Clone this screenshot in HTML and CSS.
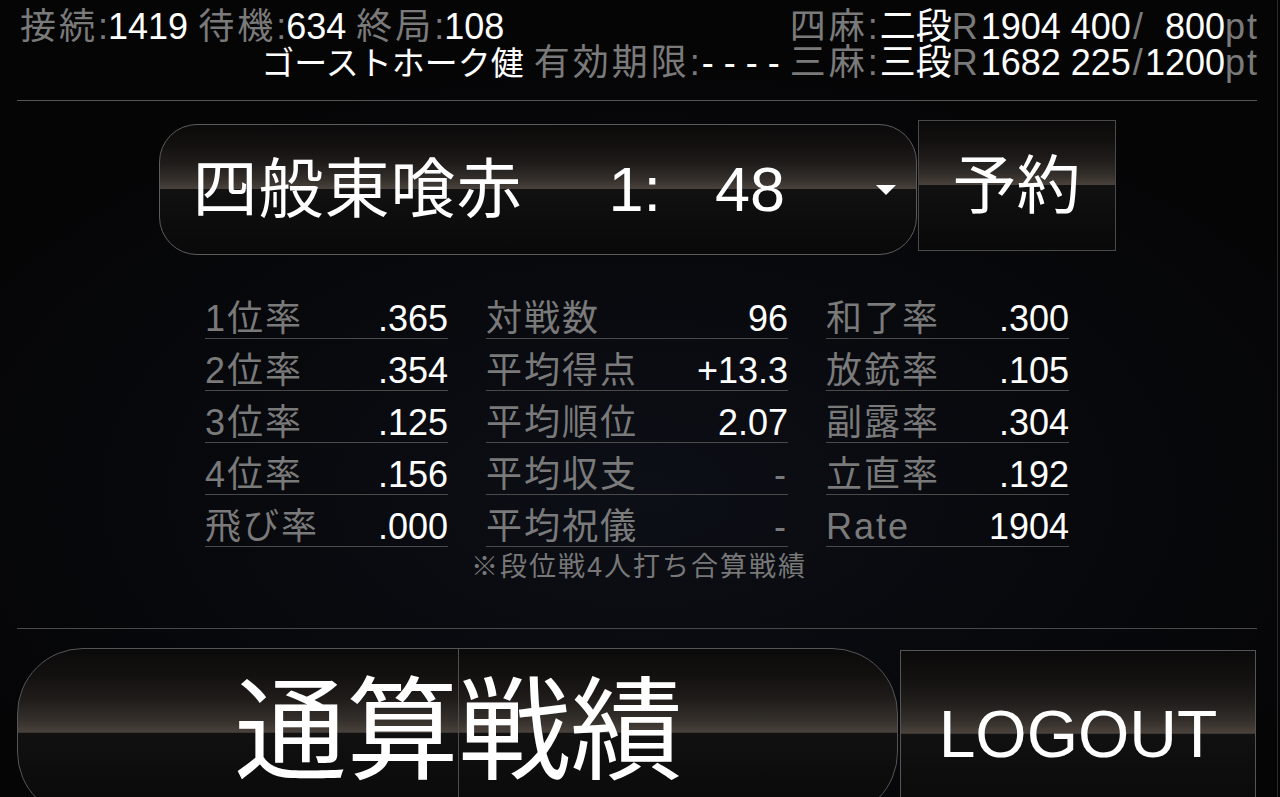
FILE: index.html
```html
<!DOCTYPE html>
<html lang="ja">
<head>
<meta charset="utf-8">
<title>ロビー</title>
<link rel="stylesheet" href="styles.css">
</head>
<body>
<div class="screen">
  <header class="status">
    <div class="status-row">
      <div class="conn"><span class="lbl k">接続</span><span class="lbl">:</span>1419 <span class="lbl k">待機</span><span class="lbl">:</span>634 <span class="lbl k">終局</span><span class="lbl">:</span>108</div>
      <div class="rank"><span class="lbl k">四麻</span><span class="lbl sep">:</span>二段<span class="lbl r">R</span>1904 400<span class="lbl sl">/</span>  800<span class="lbl pt">pt</span></div>
    </div>
    <div class="status-row end">
      <div class="rank"><span class="name">ゴーストホーク健</span> <span class="lbl k">有効期限</span><span class="lbl sep">:</span>- - - - <span class="lbl k">三麻</span><span class="lbl sep">:</span>三段<span class="lbl r">R</span>1682 225<span class="lbl sl">/</span>1200<span class="lbl pt">pt</span></div>
    </div>
  </header>

  <section class="lobby">
    <div class="select gloss">
      <span class="mode">四般東喰赤</span>
      <span class="room">1:</span>
      <span class="count">48</span>
      <span class="caret"></span>
    </div>
    <div class="reserve gloss">予約</div>
  </section>

  <section class="stats">
    <div class="col">
      <div class="row"><span class="lbl">1位率</span><span>.365</span></div>
      <div class="row"><span class="lbl">2位率</span><span>.354</span></div>
      <div class="row"><span class="lbl">3位率</span><span>.125</span></div>
      <div class="row"><span class="lbl">4位率</span><span>.156</span></div>
      <div class="row"><span class="lbl">飛び率</span><span>.000</span></div>
    </div>
    <div class="col wide">
      <div class="row"><span class="lbl">対戦数</span><span>96</span></div>
      <div class="row"><span class="lbl">平均得点</span><span>+13.3</span></div>
      <div class="row"><span class="lbl">平均順位</span><span>2.07</span></div>
      <div class="row"><span class="lbl">平均収支</span><span class="lbl">-</span></div>
      <div class="row"><span class="lbl">平均祝儀</span><span class="lbl">-</span></div>
    </div>
    <div class="col">
      <div class="row"><span class="lbl">和了率</span><span>.300</span></div>
      <div class="row"><span class="lbl">放銃率</span><span>.105</span></div>
      <div class="row"><span class="lbl">副露率</span><span>.304</span></div>
      <div class="row"><span class="lbl">立直率</span><span>.192</span></div>
      <div class="row"><span class="lbl">Rate</span><span>1904</span></div>
    </div>
  </section>
  <p class="note">※段位戦4人打ち合算戦績</p>

  <footer class="actions">
    <div class="total gloss">通算戦績</div>
    <div class="logout gloss">LOGOUT</div>
  </footer>
</div>
</body>
</html>
```

FILE: styles.css
```css
html, body {
  margin: 0;
  height: 100%;
}

body {
  background: radial-gradient(ellipse 60% 55% at 50% 62%, #0c0f16 0%, #08090d 55%, #050506 100%);
  font-family: "Liberation Sans", "Noto Sans CJK JP", sans-serif;
  color: #fff;
  overflow: hidden;
}

.screen {
  box-sizing: border-box;
  width: 1278px;
  height: 797px;
  padding: 0 20px 0 17px;
  border-right: 1px solid #2a2a2a;
  overflow: hidden;
}

.lbl {
  color: #7a7a7a;
}

.k {
  letter-spacing: 3px;
}

/* status header */
.status {
  box-sizing: border-box;
  height: 101px;
  padding-top: 9px;
  border-bottom: 1px solid #555;
}

.status-row {
  display: flex;
  justify-content: space-between;
  height: 36px;
  font-size: 36px;
  line-height: 36px;
  white-space: pre;
}

.status-row.end {
  justify-content: flex-end;
}

.conn {
  padding-left: 3px;
}

.name {
  font-size: 33px;
}

.sep {
  letter-spacing: 2px;
}

.r {
  letter-spacing: 3px;
}

.sl {
  padding-left: 2px;
  letter-spacing: 2px;
}

.pt {
  letter-spacing: 2px;
  margin-right: -2px;
}

/* glossy buttons */
.gloss {
  background: linear-gradient(to bottom,
    #0b0a0a 0%,
    #131110 16%,
    #1f1c1a 30%,
    #342f2b 42%,
    #4a423c 49.6%,
    #121111 50%,
    #0e0d0d 72%,
    #090909 100%);
}

.lobby {
  display: flex;
  justify-content: center;
  align-items: flex-start;
  margin-top: 19px;
}

.select {
  box-sizing: border-box;
  width: 758px;
  height: 131px;
  margin-top: 4px;
  padding-left: 33px;
  border: 1px solid #5c5c5c;
  border-radius: 38px;
  display: flex;
  align-items: center;
  line-height: 1;
}

.mode {
  font-size: 65px;
  letter-spacing: 1px;
}

.room {
  font-size: 63px;
  margin-left: 86px;
}

.count {
  font-size: 63px;
  margin-left: 54px;
}

.caret {
  width: 0;
  height: 0;
  margin-left: 91px;
  border-left: 10px solid transparent;
  border-right: 10px solid transparent;
  border-top: 10px solid #fff;
}

.reserve {
  box-sizing: border-box;
  width: 198px;
  height: 131px;
  margin-left: 1px;
  border: 1px solid #4a4a4a;
  display: flex;
  align-items: center;
  justify-content: center;
  font-size: 64px;
  line-height: 1;
}

/* stats table */
.stats {
  display: flex;
  justify-content: center;
  gap: 38px;
  margin-top: 32px;
}

.col {
  width: 243px;
}

.col.wide {
  width: 302px;
}

.row {
  box-sizing: border-box;
  height: 52px;
  padding-top: 14px;
  border-bottom: 1px solid #4a4a4a;
  display: flex;
  justify-content: space-between;
  align-items: baseline;
  font-size: 36px;
  line-height: 36px;
}

.row .lbl {
  letter-spacing: 2px;
}

.note {
  margin: 5px 0 0;
  text-align: center;
  color: #787878;
  font-size: 27px;
  line-height: 30px;
  letter-spacing: 2px;
  padding-left: 4px;
}

/* bottom actions */
.actions {
  margin-top: 46px;
  padding-top: 19px;
  border-top: 1px solid #4a4a4a;
  display: flex;
  align-items: flex-start;
}

.total {
  position: relative;
  box-sizing: border-box;
  width: 881px;
  height: 170px;
  border: 1px solid #555;
  border-radius: 66px;
  display: flex;
  align-items: center;
  justify-content: center;
  font-size: 112px;
  line-height: 1;
  padding-left: 2px;
}

.total::after {
  content: "";
  position: absolute;
  top: 0;
  bottom: 0;
  left: 440px;
  width: 1px;
  background: #4e4e4e;
}

.logout {
  box-sizing: border-box;
  width: 356px;
  height: 168px;
  margin-top: 2px;
  margin-left: 2px;
  border: 1px solid #555;
  display: flex;
  align-items: center;
  justify-content: center;
  font-size: 66px;
  line-height: 1;
}
```
